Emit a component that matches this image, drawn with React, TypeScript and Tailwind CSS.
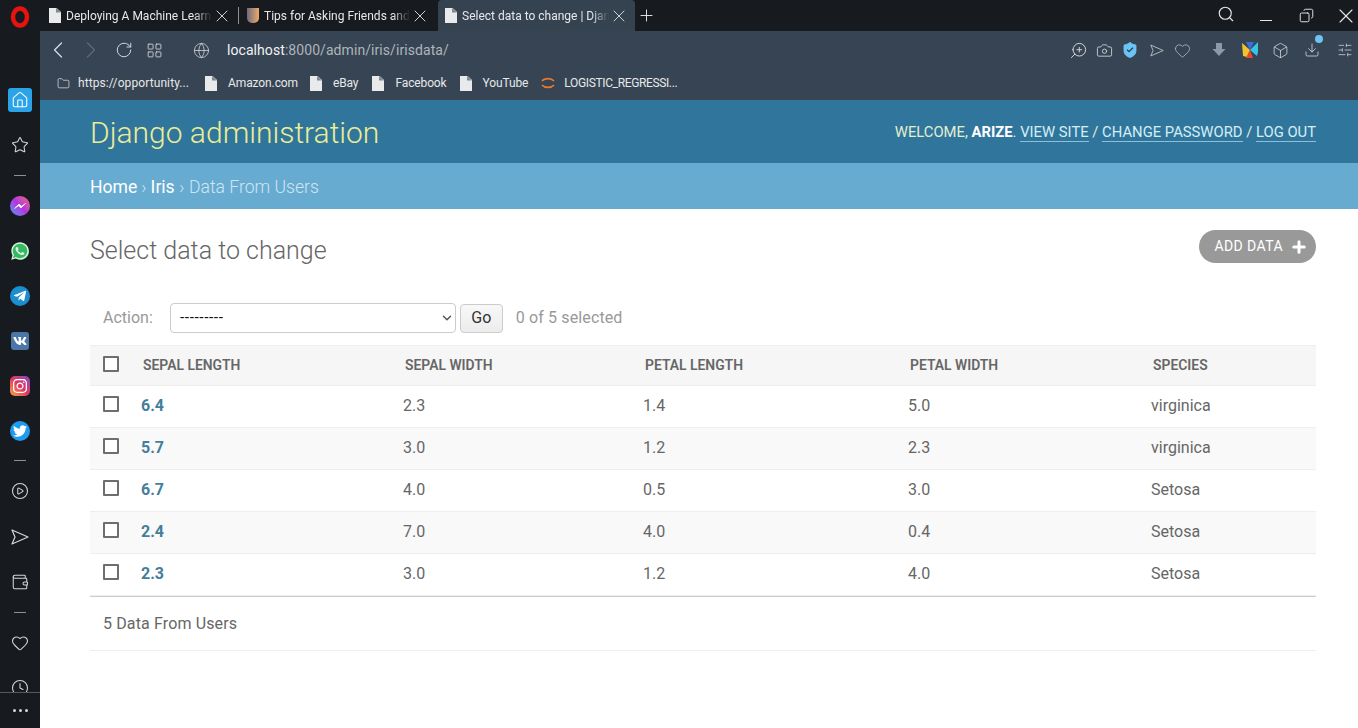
import React from 'react';
import {
  ChevronLeft, ChevronRight, RotateCw, LayoutGrid, Globe, Folder, X, Plus, Search, Copy,
  ZoomIn, Camera, Heart, Box, Download, SlidersHorizontal, Home, Star, CirclePlay, Wallet, Clock, Check, ChevronDown, Shield,
} from 'lucide-react';
import { FaWhatsapp, FaTelegramPlane, FaVk, FaInstagram, FaTwitter } from 'react-icons/fa';

const FileIcon = ({ className }: { className: string }) => (
  <svg viewBox="0 0 12 15" className={className}>
    <path d="M0 0h7.500L12 4v11H0z" fill="#e8eaec" />
    <path d="M7 0v4.500h5z" fill="#7f8790" />
  </svg>
);

const Plane = ({ className }: { className: string }) => (
  <svg viewBox="0 0 18 16" className={className} fill="none" stroke="currentColor" strokeWidth="1.2" strokeLinejoin="round">
    <path d="M1 1l16 7-16 7 3-7z" />
  </svg>
);

const tabs = [
  { title: 'Deploying A Machine Learn', box: 'w-[192px] pl-[4px] pr-[5px]' },
  { title: 'Tips for Asking Friends and', box: 'w-[197px] ml-[1px] pl-[8px] pr-[5px] my-[7px] border-l border-[#8d9196]' },
  { title: 'Select data to change | Djan', box: 'w-[197px] ml-[3px] pl-[7px] pr-[6px] bg-[#354351] rounded-t-[4px]' },
];

const bookmarks = [
  { name: 'Amazon.com', gap: 'ml-[16px]' },
  { name: 'eBay', gap: 'ml-[12px]' },
  { name: 'Facebook', gap: 'ml-[14px]' },
  { name: 'YouTube', gap: 'ml-[13px]' },
];

const rows = [
  ['6.4', '2.3', '1.4', '5.0', 'virginica'],
  ['5.7', '3.0', '1.2', '2.3', 'virginica'],
  ['6.7', '4.0', '0.5', '3.0', 'Setosa'],
  ['2.4', '7.0', '4.0', '0.4', 'Setosa'],
  ['2.3', '3.0', '1.2', '4.0', 'Setosa'],
];

const Sidebar = () => (
  <div className="w-10 h-full bg-[#171b20] flex flex-col items-center shrink-0 relative overflow-hidden">
    <div className="h-[31px] flex items-center justify-center w-full">
      <svg viewBox="0 0 20 22" className="w-[20px] h-[22px] mt-[3px]">
        <ellipse cx="10" cy="11" rx="7" ry="8.500" fill="none" stroke="#e8120f" strokeWidth="4.500" />
      </svg>
    </div>
    <div className="mt-[57px] w-6 h-6 rounded-[3px] bg-[#2aa3e8] flex items-center justify-center">
      <Home className="w-[18px] h-[18px] text-white" strokeWidth={1.4} />
    </div>
    <Star className="w-[18px] h-[18px] text-[#d5d7d9] mt-[24px]" strokeWidth={1.4} />
    <div className="w-[12px] h-px bg-[#8d9196] mt-[21px] mb-[20px]" />
    <div className="w-5 h-5 rounded-full bg-gradient-to-tr from-[#1f8cf5] via-[#b033e0] to-[#f55a6a] flex items-center justify-center">
      <svg viewBox="0 0 20 20" className="w-5 h-5"><path d="M4.500 12.500 9 8l2.500 2.200 4-2.700L11 12 8.500 9.800z" fill="#fff" stroke="#fff" strokeWidth=".6" /></svg>
    </div>
    <div className="w-5 h-5 mt-[25px] relative flex items-center justify-center">
      <div className="absolute w-[17px] h-[17px] rounded-full bg-[#37b862]" />
      <FaWhatsapp className="w-5 h-5 text-[#d9f2e1] relative" />
    </div>
    <div className="w-5 h-5 rounded-full bg-[#1b8ed0] flex items-center justify-center mt-[25px]">
      <FaTelegramPlane className="w-[14px] h-[14px] text-white" />
    </div>
    <div className="w-[18px] h-[18px] rounded-[3px] bg-[#4a76a8] flex items-center justify-center mt-[26px]">
      <FaVk className="w-[14px] h-[14px] text-white" />
    </div>
    <div className="w-5 h-5 rounded-[5px] bg-gradient-to-tr from-[#f9a03a] via-[#e0325f] to-[#8a3ac4] flex items-center justify-center mt-[26px]">
      <FaInstagram className="w-4 h-4 text-white" />
    </div>
    <div className="w-5 h-5 rounded-full bg-[#1d9bf0] flex items-center justify-center mt-[25px]">
      <FaTwitter className="w-[14px] h-[14px] text-white" />
    </div>
    <div className="w-[12px] h-px bg-[#8d9196] mt-[19px] mb-[21px]" />
    <CirclePlay className="w-[18px] h-[18px] text-[#d5d7d9]" strokeWidth={1.4} />
    <Plane className="w-[18px] h-[16px] text-[#d5d7d9] mt-[29px]" />
    <Wallet className="w-[18px] h-[18px] text-[#d5d7d9] mt-[28px]" strokeWidth={1.4} />
    <div className="w-[12px] h-px bg-[#8d9196] mt-[21px] mb-[21px]" />
    <Heart className="w-[18px] h-[18px] text-[#d5d7d9]" strokeWidth={1.4} />
    <Clock className="w-[18px] h-[18px] text-[#d5d7d9] mt-[27px] shrink-0" strokeWidth={1.4} />
    <div className="absolute left-0 right-0 bottom-0 h-9 bg-[#171b20] border-t border-[#55595e] flex items-center justify-center gap-[3px]">
      <span className="w-[3px] h-[3px] rounded-full bg-[#d5d7d9]" />
      <span className="w-[3px] h-[3px] rounded-full bg-[#d5d7d9]" />
      <span className="w-[3px] h-[3px] rounded-full bg-[#d5d7d9]" />
    </div>
  </div>
);

const TabStrip = () => (
  <div className="h-[31px] bg-[#171b20] flex items-stretch text-[12px] text-[#e6e8ea] shrink-0 pl-[5px]">
    {tabs.map((tab, i) => (
      <div key={tab.title} className={`${tab.box} flex items-center`}>
        {i === 1 ? (
          <div className="w-[12px] h-[15px] mr-[5px] rounded-b-[5px] bg-gradient-to-r from-[#6d6d78] to-[#f0a868] shrink-0" />
        ) : (
          <FileIcon className="w-[12px] h-[15px] mr-[5px] shrink-0" />
        )}
        <span className="flex-1 min-w-0 whitespace-nowrap overflow-hidden [mask-image:linear-gradient(to_right,black_88%,transparent)]">{tab.title}</span>
        <X className="w-5 h-5 text-[#cfd2d5] shrink-0" strokeWidth={1.2} />
      </div>
    ))}
    <div className="flex items-center ml-[2px]">
      <Plus className="w-[19px] h-[19px] text-[#e6e8ea]" strokeWidth={1.2} />
    </div>
    <div className="ml-auto flex items-center text-[#e6e8ea]">
      <div className="w-10 flex justify-center -mt-[3px]"><Search className="w-[18px] h-[18px]" strokeWidth={1.5} /></div>
      <div className="w-10 flex justify-center"><div className="w-[12px] h-px bg-[#e6e8ea] mt-[9px]" /></div>
      <div className="w-10 flex justify-center"><Copy className="w-[15px] h-[15px] -scale-x-100 -mt-[1px]" strokeWidth={1.5} /></div>
      <div className="w-6 ml-2 flex justify-center"><X className="w-6 h-6" strokeWidth={1.1} /></div>
    </div>
  </div>
);

const AddressBar = () => (
  <div className="h-[38px] flex items-center text-[#d7dadd] pl-[4px]">
    <ChevronLeft className="w-7 h-7" strokeWidth={1.1} />
    <ChevronRight className="w-7 h-7 text-[#5e6a76] ml-[5px]" strokeWidth={1.1} />
    <RotateCw className="w-[18px] h-[18px] ml-[10px]" strokeWidth={1.3} />
    <LayoutGrid className="w-[17px] h-[17px] ml-[13px]" strokeWidth={1.2} />
    <Globe className="w-[17px] h-[17px] ml-[30px]" strokeWidth={1.1} />
    <div className="ml-[17px] text-[14px] tracking-[0.005em] text-[#aeb5bb]">
      <span className="text-[#f2f3f4]">localhost</span>:8000/admin/iris/irisdata/
    </div>
    <div className="ml-auto flex items-center [&>div]:w-[26px] [&>div]:flex [&>div]:justify-center">
      <div><ZoomIn className="w-[19px] h-[19px] -scale-x-100" strokeWidth={1.2} /></div>
      <div><Camera className="w-[17px] h-[17px]" strokeWidth={1.2} /></div>
      <div className="relative">
        <Shield className="w-[18px] h-[18px] text-[#6cc4f4] fill-[#6cc4f4]" strokeWidth={1.2} />
        <Check className="absolute left-[9px] top-[5px] w-[8px] h-[8px] text-[#26384a]" strokeWidth={3.5} />
      </div>
      <div className="ml-[1px]"><Plane className="w-[14px] h-[13px] text-[#b9bfc4]" /></div>
      <div className="-ml-[1px]"><Heart className="w-[17px] h-[17px] text-[#b9bfc4]" strokeWidth={1.1} /></div>
      <div className="ml-[11px]">
        <svg viewBox="0 0 16 16" className="w-[16px] h-[16px]">
          <path d="M5 1h6v6h3.500L8 14 1.500 7H5z" fill="#8b9ba5" />
        </svg>
      </div>
      <div className="ml-[5px]">
        <svg viewBox="0 0 18 18" className="w-[18px] h-[18px]">
          <path d="M1 2l8 7-3 7-4-1z" fill="#f2c230" />
          <path d="M17 1 9 9l7 6 1-4z" fill="#35c5e8" />
          <path d="M5 1h8L9 9z" fill="#3a6fd8" />
          <path d="M9 9l-4 8h7z" fill="#e8482c" />
        </svg>
      </div>
      <div className="ml-[4px]"><Box className="w-[17px] h-[17px]" strokeWidth={1.1} /></div>
      <div className="relative ml-[6px]">
        <Download className="w-[16px] h-[16px]" strokeWidth={1.2} />
        <span className="absolute right-[2px] -top-[7px] w-2 h-2 rounded-full bg-[#6cc4f4]" />
      </div>
      <div className="ml-[7px]"><SlidersHorizontal className="w-[16px] h-[16px]" strokeWidth={1.1} /></div>
    </div>
  </div>
);

const Bookmarks = () => (
  <div className="h-[31px] flex items-center text-[12px] text-[#e6e8ea] pl-[17px] pb-[3px]">
    <Folder className="w-[13px] h-[13px]" strokeWidth={1.3} />
    <span className="ml-[8px] tracking-[0.008em]">https://opportunity...</span>
    {bookmarks.map((b) => (
      <div key={b.name} className={`flex items-center ${b.gap}`}>
        <FileIcon className="w-[12px] h-[15px]" />
        <span className="ml-[11px] tracking-[-0.01em]">{b.name}</span>
      </div>
    ))}
    <svg viewBox="0 0 16 16" className="w-[16px] h-[16px] ml-[12px]">
      <path d="M2 6a7 5 0 0 1 12 0" fill="none" stroke="#e87a2c" strokeWidth="1.6" />
      <path d="M2 10a7 5 0 0 0 12 0" fill="none" stroke="#e87a2c" strokeWidth="1.6" />
    </svg>
    <span className="ml-[8px] tracking-[-0.03em]">LOGISTIC_REGRESSI...</span>
  </div>
);

const Cb = () => <div className="w-[16px] h-[16px] border-2 border-[#6e6e6e] bg-white rounded-[1px]" />;

const ChangeList = () => (
  <div className="flex-1 bg-white pl-[50px] pr-[42px] pt-[21px] text-[#666] overflow-hidden">
    <div className="flex items-start justify-between">
      <h1 className="text-[25px] leading-[38px] mt-[2px] font-light text-[#666]">Select data to change</h1>
      <a className="h-[33px] rounded-full bg-[#999] text-white text-[14px] flex items-center pl-[15px] pr-[8px] tracking-[0.03em] font-normal">
        ADD DATA
        <Plus className="w-[18px] h-[18px] ml-[7px]" strokeWidth={4} />
      </a>
    </div>
    <div className="flex items-center mt-[33px] h-[30px] text-[16px] text-[#999] pl-[13px]">
      <span>Action:</span>
      <div className="ml-[17px] w-[286px] h-[30px] border border-[#ccc] rounded-[4px] flex items-center pl-[9px] pr-px text-[#111] text-[14.5px] font-['Liberation_Sans',sans-serif]">
        <span className="flex-1">---------</span>
        <ChevronDown className="w-[14px] h-[14px] text-[#555]" strokeWidth={2.5} />
      </div>
      <button className="ml-1 w-[43px] h-[29px] border border-[#ccc] rounded-[4px] bg-gradient-to-b from-[#f8f8f8] to-[#ececec] text-[#333] text-[16px]">Go</button>
      <span className="ml-[13px] tracking-[0.008em]">0 of 5 selected</span>
    </div>
    <table className="w-full table-fixed mt-[12px] border-collapse text-[16px]">
      <colgroup>
        <col className="w-[51px]" />
        <col className="w-[262px]" />
        <col className="w-[240px]" />
        <col className="w-[265px]" />
        <col className="w-[243px]" />
        <col />
      </colgroup>
      <thead>
        <tr className="h-[40px] bg-[#f6f6f6] border-t border-[#eee] border-b text-[13.9px] text-[#666] text-left">
          <th className="pl-[13px] font-normal"><div className="-mt-[4px]"><Cb /></div></th>
          <th className="pl-[2px] font-semibold">SEPAL LENGTH</th>
          <th className="pl-[2px] font-semibold">SEPAL WIDTH</th>
          <th className="pl-[2px] font-semibold">PETAL LENGTH</th>
          <th className="pl-[2px] font-semibold">PETAL WIDTH</th>
          <th className="pl-[2px] font-semibold">SPECIES</th>
        </tr>
      </thead>
      <tbody>
        {rows.map((row, i) => (
          <tr key={i} className={`h-[42px] border-b border-[#eee] [&>td]:pb-[2px] ${i % 2 === 1 ? 'bg-[#f9f9f9]' : 'bg-white'}`}>
            <td className="pl-[13px]"><div className="-mt-[3px]"><Cb /></div></td>
            <td className="font-bold text-[#447e9b]">{row[0]}</td>
            <td>{row[1]}</td>
            <td>{row[2]}</td>
            <td>{row[3]}</td>
            <td>{row[4]}</td>
          </tr>
        ))}
      </tbody>
    </table>
    <div className="h-[55px] border-t border-t-[#ccc] border-b border-b-[#eee] flex items-center pl-[13px] text-[16px] text-[#666] tracking-[0.008em]">
      5 Data From Users
    </div>
  </div>
);

export default function App() {
  return (
    <div className="w-[1358px] h-[728px] flex overflow-hidden font-['Roboto',sans-serif]">
      <Sidebar />
      <div className="flex-1 flex flex-col min-w-0">
        <TabStrip />
        <div className="h-[69px] bg-[#374453] shrink-0">
          <AddressBar />
          <Bookmarks />
        </div>
        <div className="h-[63px] bg-[#30769c] flex items-center justify-between pl-[50px] pr-[42px] shrink-0">
          <div className="text-[30px] font-light text-[#ecec97] leading-none pt-[3px]">Django administration</div>
          <div className="text-[14.8px] text-[#e2efcf] pt-[1px]">
            WELCOME, <span className="font-bold text-white">ARIZE</span>.{' '}
            <a className="border-b border-[#8fbfd6] text-[#d5eef5]">VIEW SITE</a> /{' '}
            <a className="border-b border-[#8fbfd6] text-[#d5eef5]">CHANGE PASSWORD</a> /{' '}
            <a className="border-b border-[#8fbfd6] text-[#d5eef5]">LOG OUT</a>
          </div>
        </div>
        <div className="h-[46px] bg-[#67abd0] flex items-center pl-[50px] pt-[2px] text-[17.6px] text-[#cfe6f2] font-light shrink-0">
          <a className="text-white font-normal">Home</a>
          <span className="mx-[4px]">›</span>
          <a className="text-white font-normal">Iris</a>
          <span className="mx-[4.500px]">›</span>
          <span>Data From Users</span>
        </div>
        <ChangeList />
      </div>
    </div>
  );
}
